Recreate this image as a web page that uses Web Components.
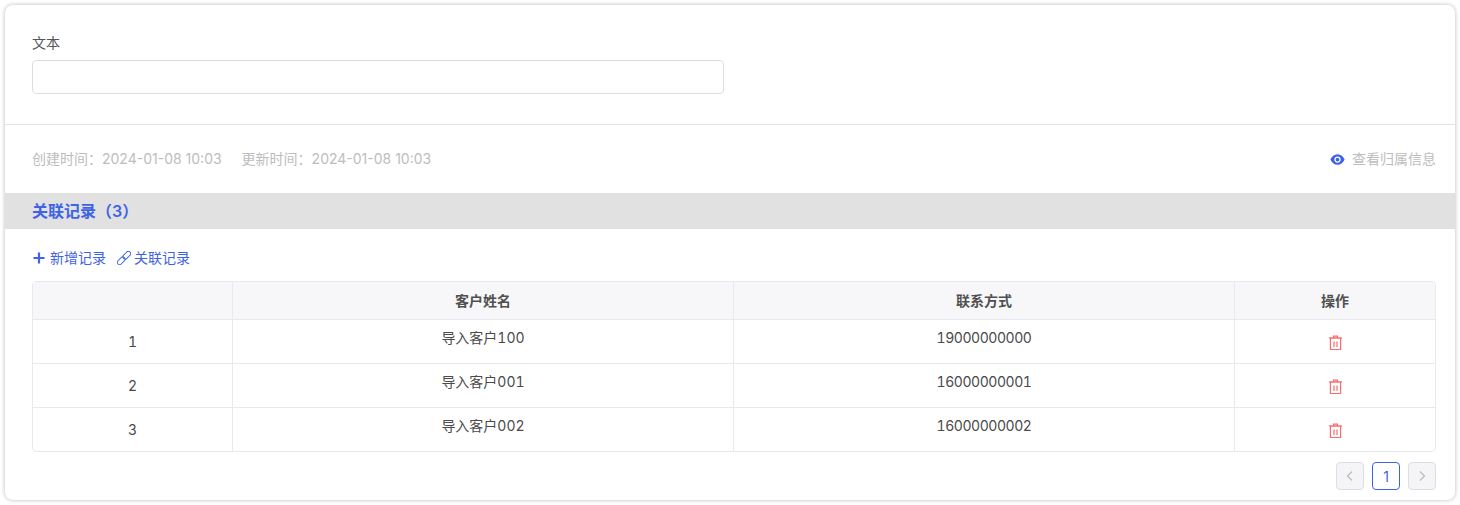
<!DOCTYPE html>
<html lang="zh">
<head>
<meta charset="utf-8">
<title>关联记录</title>
<style>
html, body { margin: 0; background: #fff; }
body { padding: 5px; height: 505px; box-sizing: border-box; overflow: hidden; font-family: Inter, "Noto Sans CJK SC", sans-serif; font-size: 14px; color: #4a4a4a; }
</style>
</head>
<body>
<record-card>
    <form-field label="文本"></form-field>
    <meta-row created="2024-01-08 10:03" updated="2024-01-08 10:03"></meta-row>
    <section-bar>关联记录（3）</section-bar>
    <record-toolbar></record-toolbar>
    <record-table></record-table>
    <page-nav></page-nav>
</record-card>

<script>
class RecordCard extends HTMLElement {
    constructor() {
        super()
        this.root = this.attachShadow({ mode: "open" })
        this.root.innerHTML = `
            <style>
            :host {
                display: block;
                height: 495px;
                box-sizing: border-box;
                background: #fff;
                border-radius: 8px;
                box-shadow: 0 0 4px rgba(0, 0, 0, .28);
                overflow: hidden;
            }
            </style>
            <slot></slot>
        `
    }
}

class FormField extends HTMLElement {
    constructor() {
        super()
        this.root = this.attachShadow({ mode: "open" })
        this.root.innerHTML = `
            <style>
            :host {
                display: block;
                height: 120px;
                padding: 27px 27px 0;
                box-sizing: border-box;
                border-bottom: 1px solid #e2e2e6;
            }
            label { display: block; height: 28px; line-height: 22px; font-size: 14px; color: #555; }
            input {
                display: block;
                width: 692px;
                height: 34px;
                box-sizing: border-box;
                border: 1px solid #dcdee6;
                border-radius: 4px;
                background: #fff;
                padding: 0 10px;
                outline: none;
            }
            </style>
            <label></label>
            <input type="text">
        `
        this.root.querySelector("label").textContent = this.getAttribute("label")
    }
}

class MetaRow extends HTMLElement {
    constructor() {
        super()
        this.root = this.attachShadow({ mode: "open" })
        this.root.innerHTML = `
            <style>
            :host {
                display: flex;
                align-items: center;
                height: 68px;
                padding: 0 19px 3px 27px;
                box-sizing: border-box;
                color: #bdbdbd;
                font-size: 14px;
            }
            .stamp { margin-right: 20px; white-space: nowrap; }
            .colon { font-family: "Noto Sans CJK TC", sans-serif; }
            .owner { margin-left: auto; display: flex; align-items: center; gap: 7px; }
            svg { display: block; margin-top: 3px; }
            </style>
            <span class="stamp">创建时间<span class="colon">：</span><span id="created"></span></span>
            <span class="stamp">更新时间<span class="colon">：</span><span id="updated"></span></span>
            <span class="owner">
                <svg width="15" height="15" viewBox="0 0 24 24">
                    <path fill="#3f63e6" fill-rule="evenodd" d="M12 3.500C6.800 3.500 2.600 7.100.6 12c2 4.900 6.200 8.500 11.400 8.500s9.400-3.600 11.400-8.500C21.400 7.100 17.200 3.500 12 3.500zM12 17a5 5 0 1 1 0-10 5 5 0 0 1 0 10zm0-2a3 3 0 1 0 0-6 3 3 0 0 0 0 6z"/>
                </svg>
                <span>查看归属信息</span>
            </span>
        `
        this.root.getElementById("created").textContent = this.getAttribute("created")
        this.root.getElementById("updated").textContent = this.getAttribute("updated")
    }
}

class SectionBar extends HTMLElement {
    constructor() {
        super()
        this.root = this.attachShadow({ mode: "open" })
        this.root.innerHTML = `
            <style>
            :host {
                display: flex;
                align-items: center;
                height: 36px;
                padding: 0 27px 3px;
                box-sizing: border-box;
                background: #e1e1e1;
                color: #3f63e6;
                font-size: 16px;
                font-weight: 600;
            }
            </style>
            <slot></slot>
        `
    }
}

class RecordToolbar extends HTMLElement {
    constructor() {
        super()
        this.root = this.attachShadow({ mode: "open" })
        this.root.innerHTML = `
            <style>
            :host {
                display: flex;
                align-items: center;
                height: 52px;
                padding: 4px 27px 0;
                box-sizing: border-box;
                color: #3f63e6;
                font-size: 14px;
                gap: 11px;
            }
            span { display: flex; align-items: center; gap: 4px; white-space: nowrap; }
            span + span { gap: 3px; }
            svg { display: block; margin-top: 1px; }
            </style>
            <span>
                <svg width="14" height="14" viewBox="0 0 14 14"><path fill="none" stroke="#3f63e6" stroke-width="2.200" d="M7 1.500v11M1.500 7h11"/></svg>
                新增记录
            </span>
            <span>
                <svg width="14" height="14" viewBox="0 0 14 14" fill="none" stroke="#3f63e6" stroke-width="1">
                    <g transform="rotate(-45 7 7)">
                        <rect x="-1.500" y="4.700" width="9" height="4.600" rx="2.300"/>
                        <rect x="6.500" y="4.700" width="9" height="4.600" rx="2.300"/>
                    </g>
                </svg>
                关联记录
            </span>
        `
    }
}

const rows = [
    ["1", "导入客户100", "19000000000"],
    ["2", "导入客户001", "16000000001"],
    ["3", "导入客户002", "16000000002"],
]

const trash = `
    <svg width="15" height="16" viewBox="0 0 15 16" fill="none" stroke="#f76c6f" stroke-width="1.200">
        <path d="M1 2.800h13M5.500 2.800V1.200h4v1.600M2.400 3.200h10.200v11.300H2.400zM6 6.500v5.500M9 6.500v5.500"/>
    </svg>
`

class RecordTable extends HTMLElement {
    constructor() {
        super()
        this.root = this.attachShadow({ mode: "open" })
        let body = ""
        for (const r of rows) {
            body += `
                <div class="cell index">${r[0]}</div>
                <div class="cell text">${r[1]}</div>
                <div class="cell text phone">${r[2]}</div>
                <div class="cell last icon">${trash}</div>
            `
        }
        this.root.innerHTML = `
            <style>
            :host {
                display: block;
                margin: 0 19px 0 27px;
                border: 1px solid #e8e9ef;
                border-radius: 4px;
                overflow: hidden;
            }
            .grid {
                display: grid;
                grid-template-columns: 200px 501px 501px 1fr;
                grid-template-rows: 38px 44px 44px 43px;
                font-size: 14px;
                color: #4a4a4a;
                font-variant-numeric: tabular-nums;
            }
            .head, .cell {
                display: flex;
                align-items: center;
                justify-content: center;
                box-sizing: border-box;
                border-right: 1px solid #e8e9ef;
                border-bottom: 1px solid #e8e9ef;
            }
            .head { background: #f7f7f9; font-weight: 600; color: #505050; padding-bottom: 2px; }
            .last { border-right: 0; }
            .cell:nth-last-child(-n+4) { border-bottom: 0; }
            .text { padding-bottom: 10px; }
            .phone { letter-spacing: -.45px; padding-bottom: 8px; }
            .icon svg { display: block; margin-top: 3px; }
            </style>
            <div class="grid">
                <div class="head"></div>
                <div class="head">客户姓名</div>
                <div class="head">联系方式</div>
                <div class="head last">操作</div>
                ${body}
            </div>
        `
    }
}

class PageNav extends HTMLElement {
    constructor() {
        super()
        this.root = this.attachShadow({ mode: "open" })
        this.root.innerHTML = `
            <style>
            :host {
                display: flex;
                justify-content: flex-end;
                gap: 8px;
                padding: 10px 19px 0 0;
            }
            div {
                width: 28px;
                height: 28px;
                box-sizing: border-box;
                display: flex;
                align-items: center;
                justify-content: center;
                border: 1px solid #dcdee6;
                border-radius: 4px;
                background: #f5f5f7;
                font-size: 14px;
            }
            .on { border-color: #3f63e6; background: #fff; color: #3f63e6; }
            svg { display: block; }
            </style>
            <div><svg width="10" height="12" viewBox="0 0 10 12"><path fill="none" stroke="#b9bcc4" stroke-width="1.300" d="M7 1.500L2.500 6 7 10.500"/></svg></div>
            <div class="on">1</div>
            <div><svg width="10" height="12" viewBox="0 0 10 12"><path fill="none" stroke="#b9bcc4" stroke-width="1.300" d="M3 1.500L7.500 6 3 10.500"/></svg></div>
        `
    }
}

window.customElements.define("record-card", RecordCard)
window.customElements.define("form-field", FormField)
window.customElements.define("meta-row", MetaRow)
window.customElements.define("section-bar", SectionBar)
window.customElements.define("record-toolbar", RecordToolbar)
window.customElements.define("record-table", RecordTable)
window.customElements.define("page-nav", PageNav)
</script>
</body>
</html>
